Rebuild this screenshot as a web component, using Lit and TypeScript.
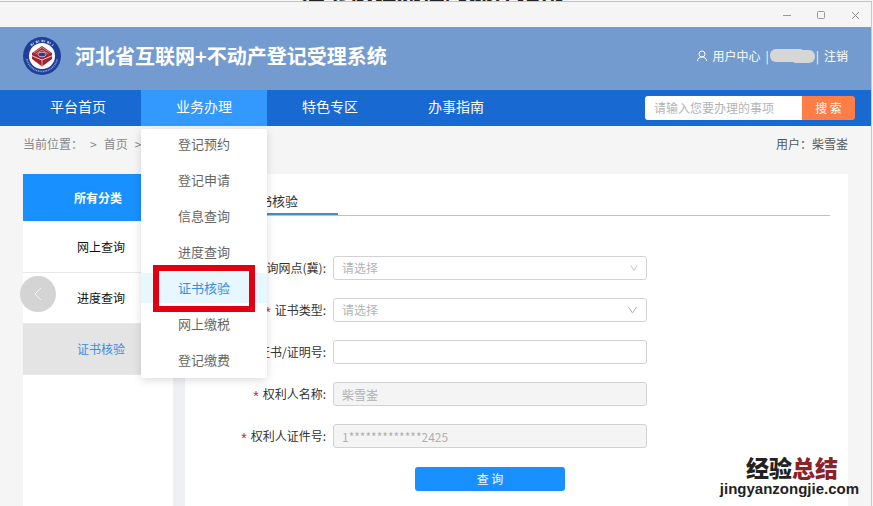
import { LitElement, html, css, svg } from "lit";
import { customElement, state } from "lit/decorators.js";
import { classMap } from "lit/directives/class-map.js";

const NAV = ["平台首页", "业务办理", "特色专区", "办事指南"];
const MENU = ["登记预约", "登记申请", "信息查询", "进度查询", "证书核验", "网上缴税", "登记缴费"];
const SIDE = ["网上查询", "进度查询", "证书核验"];

const emblem = svg`
  <circle cx="20" cy="20" r="19" fill="#1f3f9a"/>
  <circle cx="20" cy="20" r="13" fill="#fff"/>
  <path d="M20 10 L30 17 V23 L20 30.500 L10 23 V17 Z" fill="#a5202c"/>
  <path d="M9.500 19.500 L20 24 L30.500 19.500" fill="none" stroke="#fff" stroke-width="0.8"/>
  <path d="M20 24 V30" stroke="#fff" stroke-width="0.6"/>
  <path d="M11.500 17 L20 11.500 L28.500 17 M13.500 18 L20 14 L26.500 18" fill="none" stroke="#f0c8cc" stroke-width="0.6"/>
  <ellipse cx="20" cy="18.500" rx="4" ry="2.300" fill="#1f3f9a" stroke="#fff" stroke-width="0.6"/>
  <path d="M9 9.500 A15.600 15.600 0 0 1 31 9.500" fill="none" stroke="#b4c2e4" stroke-width="2.200" stroke-dasharray="2 0.800 0.800 2.200"/>
  <path d="M4.800 23 A15.500 15.500 0 0 0 35.200 23" fill="none" stroke="#8fa3d3" stroke-width="1.600" stroke-dasharray="1 0.700"/>`;

@customElement("app-root")
export class AppRoot extends LitElement {
  @state() private current = "证书核验";

  static styles = css`
    :host {
      display: block;
      font-family: "Noto Sans CJK SC", sans-serif;
      font-size: 12px;
      line-height: 18px;
      color: #333;
      background: #f5f5f5;
    }
    * { box-sizing: border-box; }
    ul { list-style: none; margin: 0; padding: 0; }
    a { color: inherit; text-decoration: none; }
    button, input, select { font: inherit; color: inherit; border: 0; margin: 0; }
    h1, h2 { margin: 0; }

    .screen { display: flex; flex-direction: column; min-height: 100vh; position: relative; }
    .behind { height: 1px; overflow: hidden; display: flex; align-items: flex-end; justify-content: center; padding-right: 8px; }
    .behind p { margin: 0; font-size: 24px; line-height: 22px; font-weight: 700; color: #222; }
    .window {
      flex: 1; display: flex; flex-direction: column;
      margin-right: 1px; border-top: 1px solid #c4c4c4; border-right: 1px solid #c8c8c8;
    }
    .titlebar { height: 25px; display: flex; justify-content: flex-end; align-items: center; gap: 24px; padding-right: 11px; }
    .titlebar button { width: 10px; height: 10px; padding: 0; background: none; display: flex; }

    .header { height: 63px; background: #739bcf; color: #fff; display: flex; align-items: center; padding: 0 23px 6px 22px; }
    .emblem { width: 40px; height: 40px; flex: none; margin-right: 13px; }
    .header h1 { font-size: 20px; line-height: 30px; font-weight: 700; flex: 1; white-space: nowrap; }
    .account { display: flex; align-items: center; gap: 5px; white-space: nowrap; }
    .masked { display: flex; align-items: center; gap: 1px; }

    .nav { height: 36px; background: #1969d2; display: flex; justify-content: space-between; align-items: center; padding: 0 16px 0 15px; }
    .nav > ul { display: flex; }
    .tab { position: relative; width: 126px; text-align: center; color: #fff; font-size: 14px; line-height: 32px; }
    .tab > a { display: block; padding-bottom: 4px; }
    .tab.open > a { background: #39f; }
    .menu {
      position: absolute; z-index: 2; top: 39px; left: 0; width: 100%;
      display: flex; flex-direction: column; gap: 6px; padding-bottom: 3px;
      background: #fff; border-radius: 2px; box-shadow: 0 2px 8px rgba(0, 0, 0, 0.15);
      font-size: 13px; line-height: 30px; color: #666;
    }
    .menu li { position: relative; }
    .menu a { display: block; }
    .menu .on a { background: #e6f7ff; color: #3a8ee0; }
    .frame { position: absolute; inset: -8px 12px -9px; border: 6px solid #e00012; pointer-events: none; }

    .search { display: flex; width: 210px; height: 24px; }
    .search input { flex: 1; min-width: 0; padding: 0 9px; background: #fff; border-radius: 3px 0 0 3px; outline: 0; }
    .search button { width: 53px; padding: 0; background: #ff7e47; color: #fff; border-radius: 0 3px 3px 0; }
    ::placeholder { color: #b4b4b4; opacity: 1; }

    .crumbs { display: flex; justify-content: space-between; padding: 9px 23px 21px; color: #888; }
    .crumbs nav { display: flex; gap: 7px; }
    .crumbs .who { color: #555; }

    .body { flex: 1; display: flex; margin: 0 23px; position: relative; background: #eff0f3; gap: 12px; }
    .side { width: 150px; flex: none; background: #fff; text-align: center; }
    .side h2 { font-size: 12px; line-height: 47px; margin-bottom: 1px; background: #1890ff; color: #fff; }
    .side li { border-bottom: 1px solid #e8e8e8; line-height: 50px; padding-left: 6px; color: #111; }
    .side li.on { background: #e4e4e4; color: #3a8ee0; }
    .side a { display: block; }
    .prev {
      position: absolute; left: -3px; top: 102px; width: 36px; height: 36px; padding: 0;
      border-radius: 50%; background: #d4d4d4; display: flex; align-items: center; justify-content: center;
    }

    .main { flex: 1; min-width: 0; background: #fff; padding: 15px 18px 15px 15px; }
    .heading { border-bottom: 1px solid #c0c0c0; display: flex; }
    .heading h2 { width: 138px; font-size: 13px; line-height: 24px; font-weight: 400; text-align: center; padding-left: 6px; border-bottom: 2px solid #3a92d0; }
    form { display: grid; grid-template-columns: 126px minmax(0, 314px); column-gap: 7px; row-gap: 18px; padding-top: 40px; }
    form label { display: flex; justify-content: flex-end; height: 24px; line-height: 24px; white-space: nowrap; }
    .required::before { content: "*"; color: #d0202c; font-family: "Liberation Sans", sans-serif; font-size: 14px; line-height: 28px; margin-right: 4px; }
    .field { position: relative; height: 24px; }
    .field input, .field select {
      appearance: none; width: 100%; height: 24px; padding: 0 8px; display: block;
      border: 1px solid #d2d2d2; border-radius: 3px; background: #fff; outline: 0;
    }
    .field select { color: #b4b4b4; }
    .field input:disabled { background: #f4f4f4; color: #b0b0b0; }
    .arrow { position: absolute; right: 9px; top: 7px; pointer-events: none; }
    .submit { grid-column: 2; justify-self: center; width: 150px; height: 24px; padding: 0; margin-top: 1px; border-radius: 3px; background: #1890ff; color: #fff; }

    .brand { position: absolute; right: 14px; bottom: 9px; text-align: right; font-weight: 900; color: #222; white-space: nowrap; }
    .brand strong { display: block; font-size: 23px; line-height: 28px; font-weight: 900; padding-right: 21px; }
    .brand em { font-style: normal; color: #8a2226; }
    .brand span { display: block; font-family: "Liberation Sans", sans-serif; font-size: 15px; line-height: 16px; font-weight: 700; }
  `;

  private arrow(size: number) {
    return html`<svg class="arrow" width=${size} height="10" viewBox="0 0 10 10" fill="none" stroke="#b4b4b4"><path d="M1 2 L5 8 L9 2"/></svg>`;
  }

  render() {
    return html`
      <div class="screen">
        <div class="behind"><p>证书核验流程的操作指南</p></div>
        <div class="window">
          <div class="titlebar">
            <button aria-label="最小化"><svg width="10" height="10"><path d="M1 5.500H9" stroke="#999"/></svg></button>
            <button aria-label="最大化"><svg width="10" height="10"><rect x="1.500" y="1.500" width="7" height="7" rx="1" fill="none" stroke="#999"/></svg></button>
            <button aria-label="关闭"><svg width="10" height="10"><path d="M2 2L9 9M9 2L2 9" stroke="#888"/></svg></button>
          </div>
          <header class="header">
            <svg class="emblem" viewBox="0 0 40 40" aria-hidden="true">${emblem}</svg>
            <h1>河北省互联网+不动产登记受理系统</h1>
            <div class="account">
              <svg width="10" height="12" viewBox="0 0 10 12" fill="none" stroke="#fff"><circle cx="5" cy="4" r="3"/><path d="M0.500 11 C0.500 8.500 2.500 7 5 7 C7.500 7 9.500 8.500 9.500 11"/></svg>
              <a href="#center">用户中心</a>
              <div class="masked">
                <span>|</span>
                <svg width="45" height="14" viewBox="0 0 45 14" fill="#d6d6d6"><rect width="36" height="13" rx="6"/><rect x="20" y="1" width="25" height="13" rx="6"/></svg>
                <span>|</span>
              </div>
              <a href="#logout">注销</a>
            </div>
          </header>
          <div class="nav">
            <ul>
              ${NAV.map((name, i) => html`
                <li class=${classMap({ tab: true, open: i === 1 })}>
                  <a href="#nav">${name}</a>
                  ${i === 1 ? html`<ul class="menu">${MENU.map((item) => html`
                    <li class=${classMap({ on: item === this.current })}>
                      <a href="#item" @click=${() => (this.current = item)}>${item}</a>
                      ${item === this.current ? html`<span class="frame"></span>` : ""}
                    </li>`)}</ul>` : ""}
                </li>`)}
            </ul>
            <div class="search">
              <input type="text" aria-label="搜索" placeholder="请输入您要办理的事项">
              <button>搜 索</button>
            </div>
          </div>
          <div class="crumbs">
            <nav><span>当前位置：</span><span>&gt;</span><a href="#home">首页</a><span>&gt;</span></nav>
            <span class="who">用户：柴雪崟</span>
          </div>
          <div class="body">
            <aside class="side">
              <h2>所有分类</h2>
              <ul>${SIDE.map((item) => html`<li class=${classMap({ on: item === this.current })}><a href="#side">${item}</a></li>`)}</ul>
            </aside>
            <main class="main">
              <div class="heading"><h2>证书核验</h2></div>
              <form @submit=${(e: Event) => e.preventDefault()}>
                <label class="required" for="site">查询网点(冀):</label>
                <div class="field"><select id="site"><option>请选择</option></select>${this.arrow(8)}</div>
                <label class="required" for="kind">证书类型:</label>
                <div class="field"><select id="kind"><option>请选择</option></select>${this.arrow(11)}</div>
                <label class="required" for="number">证书/证明号:</label>
                <div class="field"><input id="number" type="text"></div>
                <label class="required" for="owner">权利人名称:</label>
                <div class="field"><input id="owner" type="text" value="柴雪崟" disabled></div>
                <label class="required" for="idcard">权利人证件号:</label>
                <div class="field"><input id="idcard" type="text" value="1*************2425" disabled></div>
                <button class="submit">查 询</button>
              </form>
            </main>
            <button class="prev" aria-label="上一页"><svg width="10" height="14" fill="none" stroke="#f4f4f4"><path d="M8 1 L2 7 L8 13"/></svg></button>
          </div>
        </div>
        <div class="brand"><strong>经验<em>总结</em></strong><span>jingyanzongjie.com</span></div>
      </div>`;
  }
}
